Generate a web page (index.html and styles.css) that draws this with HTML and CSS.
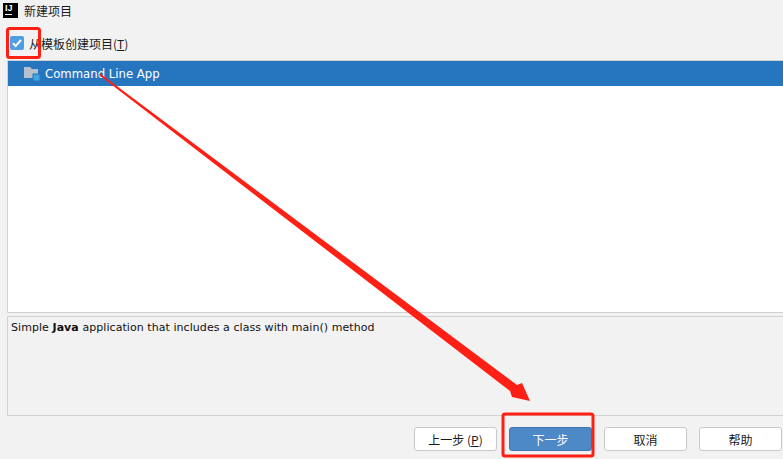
FILE: index.html
```html
<!DOCTYPE html>
<html lang="zh-CN">

<head>
  <meta charset="UTF-8">
  <title>新建项目</title>
  <link rel="stylesheet" href="styles.css">
</head>

<body>
  <div class="dialog">
    <div class="titlebar">
      <div class="logo"><span class="logo-text">IJ</span><span class="logo-bar"></span></div>
      <span class="title">新建项目</span>
    </div>

    <div class="template-row">
      <span class="checkbox">
        <svg viewBox="0 0 14 14" width="14" height="14">
          <path d="M3 7.2l2.7 2.8L11 4" fill="none" stroke="#fff" stroke-width="2" />
        </svg>
      </span>
      <span class="template-label">从模板创建项目(<u>T</u>)</span>
    </div>

    <div class="list">
      <div class="list-item">
        <svg class="folder" viewBox="0 0 16 14" width="16" height="14">
          <path d="M0 0h6l2 2h6v9H0z" fill="#b4c0cc" />
          <rect x="9" y="7" width="7" height="7" fill="#3fa8e0" stroke="#2675bf" />
        </svg>
        <span>Command Line App</span>
      </div>
    </div>

    <div class="description">Simple <b>Java</b> application that includes a class with main() method</div>

    <div class="footer">
      <button class="btn">上一步 (<u>P</u>)</button>
      <button class="btn primary">下一步</button>
      <button class="btn">取消</button>
      <button class="btn">帮助</button>
    </div>
  </div>

  <!-- annotations drawn on top of the screenshot -->
  <svg class="notes" viewBox="0 0 783 459" width="783" height="459">
    <rect x="7.5" y="28.5" width="32" height="29" rx="2" fill="none" stroke="#ff2015" stroke-width="3" />
    <rect x="503" y="414" width="90" height="42" rx="2" fill="none" stroke="#ff2015" stroke-width="3" />
    <path d="M100 73.5L517 385L522 383L530 401L512 397L510 391L99 75z" fill="#ff2015" />
  </svg>
</body>

</html>
```

FILE: styles.css
```css
body {
  margin: 0;
  width: 783px;
  height: 459px;
  overflow: hidden;
  background-color: #f2f2f2;
  font-family: "Noto Sans CJK SC", "Liberation Sans", sans-serif;
  font-size: 12px;
  color: #1a1a1a;
}

.dialog {
  display: flex;
  flex-direction: column;
  height: 459px;
}

.titlebar {
  display: flex;
  align-items: center;
  gap: 6px;
  height: 21px;
  padding-left: 3px;
}

.logo {
  width: 15px;
  height: 15px;
  background-color: #000;
  color: #fff;
  font-family: "Liberation Sans", sans-serif;
  font-size: 9px;
  font-weight: bold;
  line-height: 9px;
}

.logo-text {
  display: block;
  padding-left: 2px;
  padding-top: 1px;
}

.logo-bar {
  display: block;
  width: 7px;
  height: 1px;
  margin: 1px 0 0 2px;
  background-color: #fff;
}

.title {
  font-size: 12px;
}

.template-row {
  display: flex;
  align-items: center;
  gap: 5px;
  height: 39px;
  padding: 5px 0 0 10px;
  box-sizing: border-box;
}

.checkbox {
  display: flex;
  width: 14px;
  height: 14px;
  border-radius: 2px;
  background-color: #4f9ee3;
}

.template-label {
  font-size: 12px;
}

.list {
  flex: 0 0 253px;
  margin-left: 7px;
  background-color: #fff;
  border: 1px solid #d1d1d1;
  border-right: none;
  box-sizing: border-box;
}

.list-item {
  display: flex;
  align-items: center;
  gap: 5px;
  height: 25px;
  padding-left: 16px;
  background-color: #2675bf;
  color: #fff;
  font-family: "DejaVu Sans", sans-serif;
  font-size: 11.7px;
}

.description {
  flex: 0 0 100px;
  margin: 3px 0 0 7px;
  padding: 4px 3px;
  border: 1px solid #d1d1d1;
  border-right: none;
  box-sizing: border-box;
  font-family: "DejaVu Sans", sans-serif;
  font-size: 11px;
  letter-spacing: 0.06px;
  color: #111;
}

.footer {
  display: flex;
  justify-content: flex-end;
  gap: 12px;
  padding: 11px 1px 0 0;
}

.btn {
  width: 83px;
  height: 24px;
  padding: 0;
  background-color: #fff;
  border: 1px solid #c9c9c9;
  border-radius: 3px;
  font-family: "Noto Sans CJK SC", sans-serif;
  font-size: 12px;
  color: #1a1a1a;
}

.primary {
  background-color: #4d88c7;
  border-color: #3f78b5;
  color: #fff;
}

.notes {
  position: absolute;
  left: 0;
  top: 0;
  pointer-events: none;
}
```
